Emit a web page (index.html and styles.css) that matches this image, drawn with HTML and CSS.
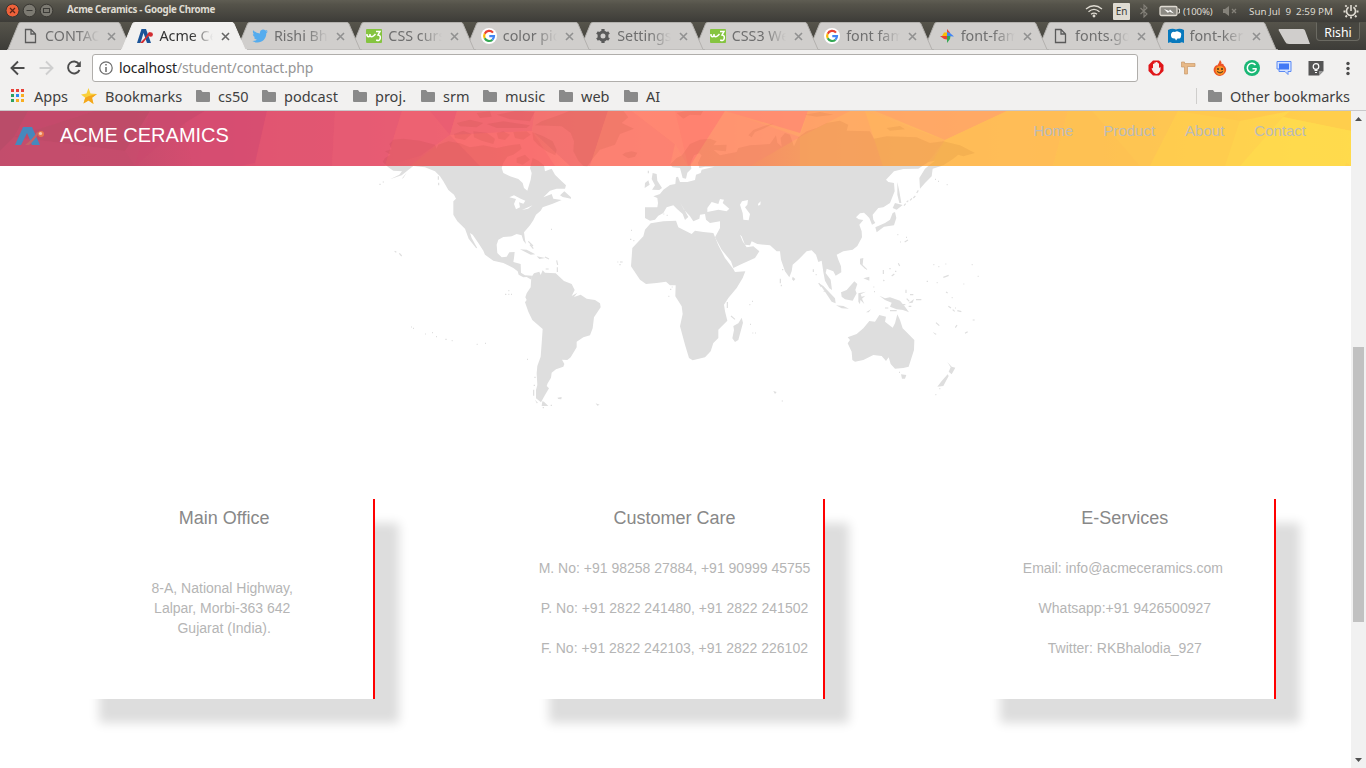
FILE: index.html
```html
<!DOCTYPE html>
<html lang="en">
<head>
<meta charset="utf-8">
<title>Acme Ceramics</title>
<link rel="stylesheet" href="styles.css">
</head>
<body>
<svg class="defs" aria-hidden="true">
  <defs>
    <g id="land">
      <path fill-rule="evenodd" d="M38 162L45 150L62 140L45 130L65 124L58 108L70 95L100 92L150 98L195 110L200 122L205 110L235 100L270 106L300 118L340 112L380 120L420 112L450 108L455 122L430 140L412 146L400 165L395 180L400 195L420 205L445 213L458 225L462 240L472 248L476 235L482 215L485 195L480 180L488 150L505 158L522 172L525 190L545 182L555 200L575 220L588 232L585 242L560 242L540 248L520 268L545 258L550 272L575 276L548 287L518 298L512 308L498 320L490 337L480 352L462 373L465 395L468 408L460 398L455 382L440 378L425 385L400 387L385 395L380 410L382 435L395 448L410 446L418 433L434 432L432 450L430 462L452 468L453 494L465 502L486 503L484 515L470 507L460 508L446 500L443 490L430 480L400 465L370 458L345 440L340 428L325 405L308 380L300 375L305 390L322 421L318 420L296 392L285 362L262 340L250 320L250 280L258 272L252 260L235 246L220 220L210 205L195 190L165 178L130 174L110 190L95 202L60 214L88 200L96 190L70 188L55 178ZM418 268L432 262L452 272L466 278L460 287L447 283L450 298L438 304L432 288L438 273ZM456 306L488 292L474 302Z"/>
      <path d="M495 52L515 40L570 20L600 8L760 8L775 28L755 45L792 62L750 78L735 110L690 125L670 150L652 175L640 174L625 158L610 130L612 100L602 75L575 55Z"/>
      <path d="M757 140L765 134L785 130L802 134L795 146L775 151ZM848 195L860 198L862 218L876 240L868 246L846 245L855 232L845 213ZM825 225L835 217L839 230L824 240ZM450 424L470 425L496 439L482 440ZM500 445L526 450L508 453ZM570 262L583 250L603 268L603 272L578 267ZM487 72L520 85L548 100L560 125L556 142L530 130L505 112L490 96ZM252 78L280 68L305 78L285 96L255 90ZM310 70L350 74L375 92L370 108L335 98L312 88ZM380 75L400 70L420 80L405 96L385 92ZM430 72L470 70L482 80L460 95L435 90ZM260 45L300 35L340 45L320 58L270 55ZM350 48L400 40L480 52L470 60L380 60ZM380 20L440 8L494 12L480 40L420 34ZM320 15L360 10L365 26L330 30ZM440 150L465 140L480 155L458 170L440 164ZM95 212L110 194L100 210Z"/>
      <g transform="translate(900 0)">
        <path fill-rule="evenodd" d="M-75 298L-38 298L-36 285L-38 270L-50 265L-30 258L-20 245L0 231L16 228L18 208L24 206L30 222L52 222L75 216L78 200L92 195L95 185L134 176L105 176L88 180L84 165L95 142L88 136L72 142L62 165L64 182L52 194L48 212L38 210L30 180L8 178L0 170L20 150L36 142L60 108L90 95L120 92L140 100L130 112L170 110L168 130L150 128L130 125L150 142L200 132L205 120L240 112L300 108L318 82L322 104L335 116L332 90L345 75L360 80L372 115L385 88L410 70L440 60L470 45L510 38L535 50L530 68L600 70L612 92L650 85L740 88L780 105L820 100L870 112L915 135L880 145L865 140L850 152L820 172L788 182L785 205L765 225L750 242L748 210L765 182L795 158L775 162L745 182L700 183L672 190L648 215L655 222L672 225L674 250L660 285L640 298L625 300L608 320L610 335L616 345L606 350L598 330L590 322L582 314L570 316L558 328L566 334L580 336L568 350L575 370L576 388L562 414L548 425L520 430L500 440L505 455L513 475L514 493L497 503L490 490L470 482L467 495L482 515L486 546L478 541L465 518L460 492L455 458L445 462L438 440L425 427L410 430L385 455L368 470L365 490L358 508L345 490L333 455L330 430L320 430L300 412L262 408L245 400L240 412L225 410L215 385L210 380L218 400L230 418L250 415L268 430L255 450L215 468L190 480L183 460L155 425L135 388L150 360L150 340L120 345L108 335L105 318L90 320L88 332L70 340L60 325L42 305L30 283L42 304L55 327L45 336L38 318L22 304L10 292L-10 298L-20 315L-35 323L-45 335L-60 338L-75 330ZM112 300L125 282L145 288L150 273L162 275L158 285L178 302L170 310L145 305L112 312ZM210 290L216 280L234 276L232 290L225 298L240 318L236 337L220 335L218 315ZM264 288L272 280L271 290L265 293Z"/>
        <path d="M-58 346L-20 340L18 338L25 358L65 378L75 368L100 372L130 375L145 412L165 450L190 483L195 492L226 490L218 510L200 540L175 570L162 590L165 610L172 638L145 665L145 690L130 705L122 730L105 748L68 757L57 750L45 710L30 655L38 618L35 595L16 565L17 532L0 532L-12 521L-40 525L-72 528L-90 515L-117 475L-113 420L-80 385L-75 365Z"/>
        <path d="M675 285L698 291L680 305L668 300ZM675 312L679 330L672 352L642 356L620 373L616 358L645 345L660 335L668 315ZM682 222L688 250L694 285L688 285L682 260ZM235 82L250 66L280 55L312 46L280 62L255 72L245 88ZM20 15L45 10L100 8L92 22L60 20L40 32ZM405 20L450 12L490 20L440 26ZM570 452L580 450L578 470L594 486L585 482L570 468ZM650 60L690 54L705 64L660 68Z"/>
      </g>
      <g transform="translate(0 456)">
        <path d="M484 52L492 40L508 35L512 45L518 31L525 38L557 40L582 63L605 72L614 90L605 108L622 98L612 111L632 104L650 116L675 120L690 130L692 142L672 172L668 205L660 226L640 232L620 245L620 262L602 292L592 300L576 299L583 312L580 320L558 328L545 338L543 353L533 370L530 378L537 385L525 405L513 427L498 415L498 390L502 375L500 340L502 318L512 290L515 250L518 207L487 180L475 155L465 127L470 120L466 112L470 100L482 82ZM495 419L504 429L500 430ZM517 424L522 425L535 438L515 438ZM562 413L575 411L574 418L565 417ZM677 430L689 434L682 437Z"/>
      </g>
      <g transform="translate(900 456)">
        <path d="M215 173L219 188L205 240L195 246L187 235L192 210L190 198L205 190ZM447 70L460 78L495 115L497 130L485 125L465 95ZM498 136L520 138L537 146L515 145ZM513 97L530 90L553 64L562 72L556 90L560 100L548 122L525 118L515 110ZM565 100L588 95L572 103L575 110L586 107L576 116L583 132L571 120L570 133L565 125ZM628 107L645 115L660 112L690 122L705 140L717 157L700 150L680 148L660 140L665 128L645 120ZM715 130L732 117L728 128ZM588 157L603 148L596 157ZM533 232L560 222L580 205L598 183L615 185L628 165L648 170L645 185L668 203L675 190L682 163L690 180L698 205L733 240L732 270L716 320L700 324L675 326L662 312L656 292L648 303L635 288L610 285L580 300L555 305L547 300L545 275L533 250L540 240ZM693 343L709 345L705 356L696 356ZM832 306L845 320L856 323L845 343L836 335L842 322ZM833 343L836 348L820 378L802 380L815 363ZM580 55L598 50L598 62ZM368 50L376 57L371 63L366 58ZM310 393L320 396L315 402ZM788 216L800 222L796 224Z"/>
      </g>
      <path class="islets" d="M28 229h4M38 222h4M74 430l5 3M88 436l7 8M205 205v10M206 224v8M123 657h3M129 661h3M165 678h3M186 674h3M198 686h3M226 694h4M245 698h3M320 709h3M345 706h3M471 754h3M405 559h4M415 548h3M415 559h3M423 559h3M493 808h4M491 832h4M491 845v18M543 364h3M783 367h3M780 394h4M790 398h3M742 462h3M750 462h8M748 470h4M475 400l14 14M480 410l10 12M525 447l12 6M560 457l3 14M562 478v14M527 483h9M900 544h4M905 537h3M895 565h3M880 318h3M890 322h3M835 188v8M518 899h4M542 892h4M1236 485h4M1231 512v14M1234 530v5M1072 582v18M1083 624l12 10M1138 590h3M1146 580h3M1140 649h3M1147 675h3M1155 675h3M1235 879h4M1330 484v8M1337 500h3M1346 525l8 12M1361 550h3M1540 486v12M1558 482h4M1565 504l8-6M1585 466l4 8M1575 490h4M1512 551h3M1510 537h3M1540 516l3 3M1582 380h3M1590 402h3M1604 402l10-6M1608 388h3M1545 600h10M1560 608h20M1590 590h16M1610 572l8 8M1620 560h10M1616 595h8M1600 605h10M1608 545v10M1638 575h16M1735 595l8 5M1748 605l6 5M1762 608l12 3M1670 520h4M1700 524h3M1690 470h3M1720 508l16-6M1780 528h3M1726 468h3M1705 476h3M1805 470h3M1823 505h3M1728 552l5 3M1745 569h3M1755 600h3M1698 644l10 9M1756 659l5-8M1785 676l8-5M1808 636h6M1696 860h3M1708 842h3M1587 793h3M1602 293l5-6M1610 282l5-4M1620 277l6-6M1630 270l6-6M1640 255l5-8M1695 214h3M1704 220h3M1730 230h3"/>
    </g>
    <g id="page"><path d="M2.500 1.500H8L12.500 6V14.500H2.500ZM8 1.500V6H12.500" fill="none" stroke="#5a5a5a" stroke-width="1.300"/></g>
    <g id="google"><circle cx="8" cy="8" r="8" fill="#fff"/><g fill="none" stroke-width="2.200"><path d="M12 4.600A5 5 0 0 0 3.700 5.700" stroke="#ea4335"/><path d="M3.700 5.700A5 5 0 0 0 3.700 10.300" stroke="#fbbc05"/><path d="M3.700 10.300A5 5 0 0 0 11.400 11.800" stroke="#34a853"/><path d="M11.400 11.800A5 5 0 0 0 13 8.100H8.300" stroke="#4285f4"/></g></g>
    <g id="w3"><rect y="1" width="16" height="14" rx="1" fill="#85c440"/><path d="M1 6v1.500q1.500 2.500 3 0V6v1.500q1.500 2.500 4 0L9.500 6M10 3.500h4L12 7q3 .5 2.200 3.500t-4 1.500" fill="none" stroke="#fff" stroke-width="1.500"/></g>
    <path id="folder" d="M1.500 2H6l1.500 2H14Q15 4 15 5V13Q15 14 14 14H2Q1 14 1 13V3Q1 2 1.500 2Z" fill="#8a8a8a"/>
    <path id="tabshape" d="M0 28L1 27.500L11.500 2Q12 .5 13.500 .5H111Q112.500 .5 113 2L124 27.500L126 28Z"/>
    <path id="close" d="M1 1L8 8M8 1L1 8" fill="none" stroke-width="1.600"/>
  </defs>
</svg>

<div class="titlebar">
  <svg class="winbtns" viewBox="0 0 60 22" width="60" height="22"><circle cx="12.500" cy="10.500" r="6.500" fill="#ee613a" stroke="#393732"/><path d="M10 8l5 5M15 8l-5 5" stroke="#5b2417" stroke-width="1.200"/><circle cx="29.500" cy="10.500" r="6.300" fill="#7c7a72" stroke="#393732"/><path d="M26.500 10.500h6" stroke="#3c3b37"/><circle cx="46.500" cy="10.500" r="6.300" fill="#7c7a72" stroke="#393732"/><rect x="43.500" y="8.500" width="6" height="4" fill="none" stroke="#3c3b37"/></svg>
  <span class="wintitle">Acme Ceramics - Google Chrome</span>
  <div class="indicators">
    <svg class="wifi" viewBox="0 0 18 14" width="18" height="14" fill="none" stroke="#dfdbd2" stroke-width="1.300"><path d="M1 5Q9-1.500 17 5M3.500 7.800Q9 3 14.500 7.800M6 10.300Q9 8 12 10.300"/><circle cx="9" cy="12" r=".8"/></svg>
    <span class="lang">En</span>
    <svg class="bt" viewBox="0 0 10 14" width="10" height="14"><path d="M1.500 4L8 10L5 13V1L8 4L1.500 10" fill="none" stroke="#85827a" stroke-width="1.100"/></svg>
    <svg class="batt" viewBox="0 0 22 12" width="22" height="12"><rect x="1" y="1.500" width="17" height="9" rx="1.500" fill="#8c8a83" stroke="#dfdbd2" stroke-width="1.300"/><path d="M19 4h1.500v4H19" fill="none" stroke="#dfdbd2"/><path d="M5 4l5 2 1-1.500 4 4-5-2-1 1.500z" fill="#fff"/></svg>
    <span class="pct">(100%)</span>
    <svg class="mute" viewBox="0 0 16 12" width="16" height="12"><path d="M1 4h2l4-3v10L3 8H1z" fill="#85827a"/><path d="M10 4l4 4M14 4l-4 4" stroke="#85827a" stroke-width="1.300"/></svg>
    <span class="clock">Sun Jul&nbsp; 9&nbsp; 2:59 PM</span>
    <svg class="gear" viewBox="0 0 16 16" width="16" height="16" fill="none" stroke="#dfdbd2"><path d="M5.600 4.200A4.500 4.500 0 1 0 10.400 4.200M8 2v6" stroke-width="1.600"/><path d="M3.700 3.700L2.300 2.300M12.300 3.700l1.400-1.400M2.500 8.500H.500M13.500 8.500h2M4 12.500l-1.500 1.500M12 12.500l1.500 1.500M8 13.500v2" stroke-width="1.900"/></svg>
  </div>
</div>

<div class="tabstrip">
  <div class="tabs">
    <div class="tab"><svg class="shape" viewBox="0 0 126 28"><use href="#tabshape"/></svg><svg class="fav" viewBox="0 0 16 16"><use href="#page"/></svg><span class="label">CONTACT</span><svg class="x" viewBox="0 0 9 9"><use href="#close"/></svg></div>
    <div class="tab active"><svg class="shape" viewBox="0 0 126 28"><use href="#tabshape"/></svg><svg class="fav" viewBox="0 0 16 16"><path d="M0 15L4.500 1H9L14 15H10L6.500 5L3.500 15Z" fill="#1b5498"/><path d="M3 15Q8 11 12 4L14 5Q9 11 6 15Z" fill="#d22c30"/><circle cx="13.700" cy="6.500" r="2.200" fill="#d22c30"/></svg><span class="label">Acme Ceramics</span><svg class="x" viewBox="0 0 9 9"><use href="#close"/></svg></div>
    <div class="tab"><svg class="shape" viewBox="0 0 126 28"><use href="#tabshape"/></svg><svg class="fav" viewBox="0 0 16 16"><path d="M16 3.500L14.300 5.200C14.500 10.500 10.500 14.500 5.500 14.500Q2.500 14.500.3 13.100Q3 13.200 4.900 11.700Q2.600 11.400 1.900 9.500H3.300Q.8 8.500.8 6L2.200 6.500Q.2 4.500 1.200 2.200Q4 5.500 8 5.600Q7.400 2.500 10 1.700Q12 1.200 13.400 2.600L15.400 1.900L14.200 3.700Z" fill="#55acee"/></svg><span class="label">Rishi Bhalodia</span><svg class="x" viewBox="0 0 9 9"><use href="#close"/></svg></div>
    <div class="tab"><svg class="shape" viewBox="0 0 126 28"><use href="#tabshape"/></svg><svg class="fav" viewBox="0 0 16 16"><use href="#w3"/></svg><span class="label">CSS cursor</span><svg class="x" viewBox="0 0 9 9"><use href="#close"/></svg></div>
    <div class="tab"><svg class="shape" viewBox="0 0 126 28"><use href="#tabshape"/></svg><svg class="fav" viewBox="0 0 16 16"><use href="#google"/></svg><span class="label">color picker</span><svg class="x" viewBox="0 0 9 9"><use href="#close"/></svg></div>
    <div class="tab"><svg class="shape" viewBox="0 0 126 28"><use href="#tabshape"/></svg><svg class="fav" viewBox="0 0 16 16"><circle cx="8" cy="8" r="4" fill="none" stroke="#5a5a5a" stroke-width="3"/><path d="M8 1v3M8 12v3M2 4.500l2.500 1.500M11.500 10l2.500 1.500M2 11.500l2.500-1.500M11.500 6l2.500-1.500" stroke="#5a5a5a" stroke-width="3.200"/></svg><span class="label">Settings</span><svg class="x" viewBox="0 0 9 9"><use href="#close"/></svg></div>
    <div class="tab"><svg class="shape" viewBox="0 0 126 28"><use href="#tabshape"/></svg><svg class="fav" viewBox="0 0 16 16"><use href="#w3"/></svg><span class="label">CSS3 Web</span><svg class="x" viewBox="0 0 9 9"><use href="#close"/></svg></div>
    <div class="tab"><svg class="shape" viewBox="0 0 126 28"><use href="#tabshape"/></svg><svg class="fav" viewBox="0 0 16 16"><use href="#google"/></svg><span class="label">font family</span><svg class="x" viewBox="0 0 9 9"><use href="#close"/></svg></div>
    <div class="tab"><svg class="shape" viewBox="0 0 126 28"><use href="#tabshape"/></svg><svg class="fav" viewBox="0 0 16 16"><path d="M8 8V1L11 4.500V7Z" fill="#ea4335"/><path d="M8 8H3L5 4.500H8Z" fill="#fbbc05"/><path d="M8 8V4L11 5L15 8.500Z" fill="#4285f4"/><path d="M8 8H11.500L11 11L8 15Z" fill="#34a853"/><path d="M8 8V11.500L5 11L1 8Z" fill="#ea4335"/></svg><span class="label">font-family</span><svg class="x" viewBox="0 0 9 9"><use href="#close"/></svg></div>
    <div class="tab"><svg class="shape" viewBox="0 0 126 28"><use href="#tabshape"/></svg><svg class="fav" viewBox="0 0 16 16"><use href="#page"/></svg><span class="label">fonts.google</span><svg class="x" viewBox="0 0 9 9"><use href="#close"/></svg></div>
    <div class="tab"><svg class="shape" viewBox="0 0 126 28"><use href="#tabshape"/></svg><svg class="fav" viewBox="0 0 16 16"><path d="M0 2Q4 0 8 1.500Q12 0 16 2V15Q13.500 13.500 12 15H4Q2.500 13.500 0 15Z" fill="#0879bd"/><path d="M3 6Q4 3 7 4Q9 2.500 11 4Q14 4.500 13 8Q13 11 9.500 10.500L8 12.500L7 10.500Q2.500 11 3 6Z" fill="#fff"/></svg><span class="label">font-kerning</span><svg class="x" viewBox="0 0 9 9"><use href="#close"/></svg></div>
  </div>
  <svg class="newtab" viewBox="0 0 34 17" width="34" height="17"><path d="M2 1H26Q27.500 1 28 2.500L33 16H12Q9 16 8 13.500L1.500 2Z" fill="#d0cecc"/></svg>
  <span class="profile">Rishi</span>
</div>

<div class="toolbar">
  <svg class="navbtns" viewBox="0 0 84 28" width="84" height="28" fill="none" stroke-width="1.900"><path d="M24.500 14H12M18 7.500L11.500 14L18 20.500" stroke="#4c4c4c"/><path d="M39.500 14H52M46 7.500L52.500 14L46 20.500" stroke="#cfcfcf"/><path d="M79 10A6 6 0 1 0 79.500 16" stroke="#4c4c4c"/><path d="M80.800 7v6h-6z" fill="#4c4c4c"/></svg>
  <div class="omnibox">
    <svg viewBox="0 0 14 14" width="14" height="14"><circle cx="7" cy="7" r="6.200" fill="none" stroke="#6b6b6b" stroke-width="1.200"/><path d="M7 6v5M7 3v1.600" stroke="#6b6b6b" stroke-width="1.500"/></svg>
    <span class="url"><b>localhost</b>/student/contact.php</span>
  </div>
  <div class="extensions">
    <svg viewBox="0 0 16 16"><path d="M5 .5h6L15.500 5v6L11 15.500H5L.5 11V5Z" fill="#e01518"/><path d="M3.500 8.500L5 8V4L6.500 3.500V2.500H8V2H9.500V3L11 3.500V8L12.500 7V9.500Q11.500 13.500 8.500 14Q5.500 13.500 3.500 8.500Z" fill="#f5eeee"/></svg>
    <svg viewBox="0 0 16 16"><path d="M1.500 2h3v1.500H15v3H7.500V14h-3V7h-3Z" fill="#e8b987" stroke="#c99a68" stroke-width=".7"/></svg>
    <svg viewBox="0 0 16 16"><path d="M8 0Q10 2 9.500 4Q12 3 11.500 5Q16 9 13 13Q11 16 8 16Q4 16 2 12Q.500 8 4.500 5Q5 6 5.500 5Q7 3 8 0Z" fill="#ed5325"/><circle cx="8" cy="10.500" r="4.500" fill="#f99324"/><path d="M6 8v2M10 8v2" stroke="#432" stroke-width="1.500"/><path d="M5 11.500q3 3 6 0" fill="none" stroke="#432"/></svg>
    <svg viewBox="0 0 16 16"><circle cx="8" cy="8" r="8" fill="#1ab775"/><path d="M11.500 5A4.600 4.600 0 1 0 12 10V8.700H8.500" fill="none" stroke="#fff" stroke-width="1.500"/></svg>
    <svg viewBox="0 0 16 16"><path d="M1 1.500h14v10h-3v3L9 11.500H3V9H1Z" fill="#d6e3ff" stroke="#5b8af5"/><path d="M3 3.500h10v6H3z" fill="#4279f5"/></svg>
    <svg viewBox="0 0 16 16"><path d="M.500 1h15v10L11 15.500H.500Z" fill="#555"/><path d="M15.500 11H11v4.500Z" fill="#999"/><circle cx="8" cy="6.500" r="2.800" fill="none" stroke="#fff" stroke-width="1.200"/><path d="M6.500 10.500h3M7 12.500h2" stroke="#fff" stroke-width="1.200"/></svg>
    <svg viewBox="0 0 16 16" fill="#4c4c4c"><circle cx="8" cy="3.500" r="1.700"/><circle cx="8" cy="8.500" r="1.700"/><circle cx="8" cy="13.500" r="1.700"/></svg>
  </div>
</div>

<div class="bookmarks">
  <span class="bm apps"><svg viewBox="0 0 16 16"><path d="M1 1h3v3H1zM6 1h3v3H6zM11 1h3v3h-3z" fill="#e8423a"/><path d="M1 6h3v3H1zM1 11h3v3H1z" fill="#2da160"/><path d="M6 6h3v3H6z" fill="#2b8bf2"/><path d="M11 6h3v3h-3zM6 11h3v3H6zM11 11h3v3h-3z" fill="#f8ae20"/></svg>Apps</span>
  <span class="bm star"><svg viewBox="0 0 16 16"><path d="M7.500 0L9.500 5.500L16 6L11 9.800L12.500 16L7.500 12.500L2.500 15.500L4.200 9.800L0 6.500L5.500 5.500Z" fill="#f9d03b"/><path d="M8 8L16 6L11 9.800L12.500 16L7.500 12.500L2.500 15.500L4.200 9.800Z" fill="#f4a51c"/></svg>Bookmarks</span>
  <span class="bm cs"><svg viewBox="0 0 16 16"><use href="#folder"/></svg>cs50</span>
  <span class="bm pod"><svg viewBox="0 0 16 16"><use href="#folder"/></svg>podcast</span>
  <span class="bm proj"><svg viewBox="0 0 16 16"><use href="#folder"/></svg>proj.</span>
  <span class="bm srm"><svg viewBox="0 0 16 16"><use href="#folder"/></svg>srm</span>
  <span class="bm mus"><svg viewBox="0 0 16 16"><use href="#folder"/></svg>music</span>
  <span class="bm web"><svg viewBox="0 0 16 16"><use href="#folder"/></svg>web</span>
  <span class="bm ai"><svg viewBox="0 0 16 16"><use href="#folder"/></svg>AI</span>
  <span class="bm other"><svg viewBox="0 0 16 16"><use href="#folder"/></svg>Other bookmarks</span>
</div>

<div class="viewport">
  <main class="site">
    <header class="header">
      <svg class="mosaic" viewBox="0 0 1351 55" width="1351" height="55">
        <defs><linearGradient id="warm" gradientUnits="userSpaceOnUse" x1="0" y1="0" x2="1351" y2="0">
          <stop offset="0" stop-color="#bf4e6c"/><stop offset=".1" stop-color="#c84c6d"/><stop offset=".15" stop-color="#d64d70"/><stop offset=".2" stop-color="#e25571"/><stop offset=".28" stop-color="#ec6072"/><stop offset=".37" stop-color="#f96f72"/><stop offset=".45" stop-color="#ff8374"/><stop offset=".53" stop-color="#ff9070"/><stop offset=".6" stop-color="#ffa669"/><stop offset=".68" stop-color="#ffb75f"/><stop offset=".77" stop-color="#ffc056"/><stop offset=".86" stop-color="#ffcb50"/><stop offset="1" stop-color="#ffdb4c"/>
        </linearGradient></defs>
        <path fill="url(#warm)" d="M0 0h1351v55H0z"/>
        <g opacity=".8">
        <path fill="#b94c69" d="M0 0H28L14 26L0 40Z"/><path fill="#c54a6b" d="M28 0H95L14 26Z"/><path fill="#be4b68" d="M95 0H150L125 40L14 26Z"/><path fill="#c54d6c" d="M0 40L14 26L125 40L135 55H0Z"/>
        <path fill="#cb4a6e" d="M150 0H205L185 12L135 55Z"/><path fill="#d64d72" d="M205 0H267L255 52L240 55H192L185 12Z"/><path fill="#e15672" d="M267 0H335L332 55H255Z"/><path fill="#e65b74" d="M335 0H402L385 55H332Z"/><path fill="#ed6272" d="M402 0H435L450 24L420 45L385 55Z"/><path fill="#e85c73" d="M430 0H457L450 24Z"/><path fill="#f06971" d="M457 0H535L532 20L450 24Z"/><path fill="#f06a6e" d="M450 24L480 55H410Z"/><path fill="#f97070" d="M532 20L555 55H480L450 24Z"/>
        <path fill="#f27270" d="M535 0H608L590 55H570L532 20Z"/><path fill="#fc8172" d="M608 0H632L675 33L670 55H590Z"/><path fill="#ff8773" d="M632 0H675L688 55L675 33Z"/><path fill="#ff8070" d="M675 0H725L712 40L688 55Z"/><path fill="#ff8b72" d="M725 0H808L800 22Z"/><path fill="#ff9571" d="M725 0L800 26L750 55H690Z"/><path fill="#ffa168" d="M808 0H865L800 26Z"/><path fill="#ffab65" d="M800 26L850 0H865L883 55H800Z"/><path fill="#ffb35f" d="M865 0L945 29L925 55H883Z"/><path fill="#ffa568" d="M875 0H1007L945 29Z"/>
        <path fill="#ffbd57" d="M945 29L1007 0H1068L1053 55H930Z"/><path fill="#fec153" d="M1068 0H1115L1140 55H1053Z"/><path fill="#fec553" d="M1092 0H1178L1150 55H1140Z"/><path fill="#ffcd4e" d="M1178 0L1240 10L1225 55H1150Z"/><path fill="#ffc74e" d="M1178 0H1290L1240 10Z"/><path fill="#ffd34e" d="M1240 10L1283 6L1351 55H1225Z"/><path fill="#ffcc4c" d="M1290 0H1351V20L1283 6Z"/><path fill="#ffdb4d" d="M1283 6L1351 20V40L1345 55H1240Z"/>
        </g>
        <use href="#land" class="shade" transform="translate(370 -3) scale(.3333)"/>
      </svg>
      <div class="brand">
        <svg viewBox="0 0 30 20" width="30" height="20"><path d="M0 19L8 1H17L25 19H17L12 7L6 19Z" fill="#4688bd"/><path d="M10 19Q18 13 22 6L24 7Q19 15 14 19Z" fill="#c46468"/><circle cx="26" cy="8" r="3" fill="#e9774e"/><circle cx="25.500" cy="7.500" r="1.600" fill="#f7c8b0"/></svg>
        <span>ACME CERAMICS</span>
      </div>
      <nav class="nav"><a>Home</a><a>Product</a><a>About</a><a>Contact</a></nav>
    </header>
    <section class="map"><svg viewBox="0 174 1830 762" width="610" height="254"><use href="#land"/></svg></section>
    <section class="cards">
      <article class="card office"><h4>Main Office</h4><p>8-A, National Highway,&nbsp;<br>Lalpar, Morbi-363 642&nbsp;<br>Gujarat (India).</p></article>
      <article class="card"><h4>Customer Care</h4><p>M. No: +91 98258 27884, +91 90999 45755</p><p>P. No: +91 2822 241480, +91 2822 241502</p><p>F. No: +91 2822 242103, +91 2822 226102</p></article>
      <article class="card"><h4>E-Services</h4><p>Email: info@acmeceramics.com&nbsp;</p><p>Whatsapp:+91 9426500927</p><p>Twitter: RKBhalodia_927</p></article>
    </section>
  </main>
  <div class="scrollbar">
    <svg viewBox="0 0 15 15" width="15" height="15"><path d="M4 10L7.500 6L11 10Z" fill="#505050"/></svg>
    <div class="thumb"></div>
    <svg class="down" viewBox="0 0 15 15" width="15" height="15"><path d="M4 5L7.500 9L11 5Z" fill="#505050"/></svg>
  </div>
</div>
</body>
</html>
```

FILE: styles.css
```css
* { box-sizing: border-box; }
html, body { height: 100%; }
body { margin: 0; display: flex; flex-direction: column; overflow: hidden; background: #fff; font-family: "Noto Sans", "Open Sans", sans-serif; }
svg { display: block; flex: none; }
.defs { display: none; }

/* desktop panel */
.titlebar { height: 22px; flex: none; display: flex; align-items: center; background: linear-gradient(#5f5d53, #55534a 20%, #3d3c38); color: #dfdbd2; }
.winbtns { margin-right: 7px; }
.wintitle { font: bold 9.800px/20px "Noto Sans", sans-serif; letter-spacing: -.34px; white-space: nowrap; position: relative; top: -1px; }
.indicators { margin-left: auto; display: flex; align-items: center; height: 21px; padding-right: 7px; font-size: 10px; white-space: nowrap; }
.lang { width: 17px; height: 17px; margin-left: 10px; background: #dfdbd2; color: #3c3b37; line-height: 17px; text-align: center; border-radius: 1px; }
.bt { margin-left: 9px; }
.batt { margin-left: 10px; }
.pct { width: 30px; margin-left: 2px; font-size: 9.600px; letter-spacing: -.1px; }
.mute { margin-left: 9px; }
.clock { width: 84px; margin-left: 11px; font-size: 9.800px; letter-spacing: 0; }
.gear { margin-left: 10px; }

/* tabs */
.tabstrip { height: 28px; flex: none; display: flex; padding-left: 7px; background: linear-gradient(#56544b, #3d3c38); }
.tabs { display: flex; width: 1270px; flex: none; }
.tab { position: relative; width: 126px; height: 28px; flex: none; margin-right: -11.550px; display: flex; align-items: center; padding-left: 16px; color: #6f6f6f; font-size: 14.300px; }
.tab:nth-child(1) { z-index: 11; } .tab:nth-child(3) { z-index: 9; } .tab:nth-child(4) { z-index: 8; }
.tab:nth-child(5) { z-index: 7; } .tab:nth-child(6) { z-index: 6; } .tab:nth-child(7) { z-index: 5; }
.tab:nth-child(8) { z-index: 4; } .tab:nth-child(9) { z-index: 3; } .tab:nth-child(10) { z-index: 2; } .tab:nth-child(11) { z-index: 1; }
.tab.active { z-index: 12; color: #333; }
.shape { position: absolute; inset: 0; width: 126px; height: 28px; fill: #d0cecc; stroke: #b3b1ae; z-index: -1; }
.active .shape { fill: #f2f1f0; stroke: #f2f1f0; }
.fav { width: 16px; height: 16px; margin-right: 6px; }
.label { width: 54px; overflow: hidden; white-space: nowrap; line-height: 24px; -webkit-mask-image: linear-gradient(90deg, #000 60%, transparent); mask-image: linear-gradient(90deg, #000 60%, transparent); }
.x { width: 9px; height: 9px; margin-left: 8px; stroke: #919191; }
.active .x { stroke: #666; }
.newtab { margin-top: 6px; }
.profile { width: 44px; height: 19px; margin-left: 5px; border: 1px solid #6b6a62; border-top-color: #45443e; border-radius: 0 0 4px 4px; background: #474640; color: #fff; font-size: 12.300px; line-height: 19px; text-align: center; }

/* toolbar */
.toolbar { height: 33px; flex: none; display: flex; align-items: center; padding: 3px 9px 0 0; background: #f2f1f0; }
.navbtns { margin-right: 8px; }
.omnibox { width: 1046px; height: 28px; flex: none; display: flex; align-items: center; gap: 6px; padding-left: 6px; background: #fff; border: 1px solid #b0aeab; border-radius: 3px; }
.url { position: relative; top: -1px; color: #969696; font-size: 14px; letter-spacing: -.14px; white-space: nowrap; }
.url b { color: #222; font-weight: 400; }
.extensions { display: flex; gap: 16px; margin-left: 10px; }
.extensions svg { width: 16px; height: 16px; }

/* bookmarks */
.bookmarks { height: 28px; flex: none; display: flex; align-items: center; padding: 0 0 2px 10px; background: #f2f1f0; border-bottom: 1px solid #c9c8ca; color: #3f3f3f; font-size: 14.500px; }
.bm { display: flex; align-items: center; flex: none; gap: 7px; height: 18px; line-height: 18px; white-space: nowrap; }
.bm svg { width: 16px; height: 16px; }
.apps { width: 71px; gap: 8px; }
.star { width: 114px; gap: 8px; }
.cs { width: 66px; }
.pod { width: 91px; }
.proj { width: 68px; }
.srm { width: 62px; }
.mus { width: 76px; }
.web { width: 65px; }
.other { margin-left: auto; width: 170px; height: 16px; padding-left: 10px; border-left: 1px solid #cfcecc; }

/* page */
.viewport { flex: 1; min-height: 0; display: flex; }
.site { width: 1351px; font-family: "Liberation Sans", Arial, sans-serif; }
.header { position: relative; height: 55px; display: flex; padding-left: 15px; }
.mosaic { position: absolute; inset: 0; z-index: -1; }
.shade { fill: #702000; fill-opacity: .065; }
.brand { display: flex; align-items: center; gap: 15px; height: 48px; color: #fff; font-size: 20px; white-space: nowrap; }
.brand svg { margin-top: 2px; }
.nav { display: flex; gap: 30px; margin-left: auto; padding-right: 45px; color: #bbb; font-size: 15px; line-height: 40px; }
.map { height: 333px; padding-left: 370px; fill: #dedede; }
.islets { fill: none; stroke: #dedede; stroke-width: 3.500; }
.header .islets { stroke: none; }
.cards { display: grid; grid-template-columns: repeat(3, 1fr); justify-items: center; }
.card { width: 300px; height: 200px; border-right: 2px solid red; background: #fff; box-shadow: 24px 24px 10px #ddd; text-align: center; color: #b5b5b5; font-size: 14px; line-height: 20px; }
.card h4 { margin: 9px 0 30px; color: #888; font-size: 18px; font-weight: 400; line-height: 20px; }
.card p { margin: 0 0 20px; white-space: nowrap; }
.card.office h4 { margin-bottom: 50px; }

.scrollbar { width: 15px; display: flex; flex-direction: column; align-items: center; background: #f1f1f1; }
.thumb { width: 11px; height: 275px; margin-top: 221px; background: #c1c1c1; }
.down { margin-top: auto; }
```
